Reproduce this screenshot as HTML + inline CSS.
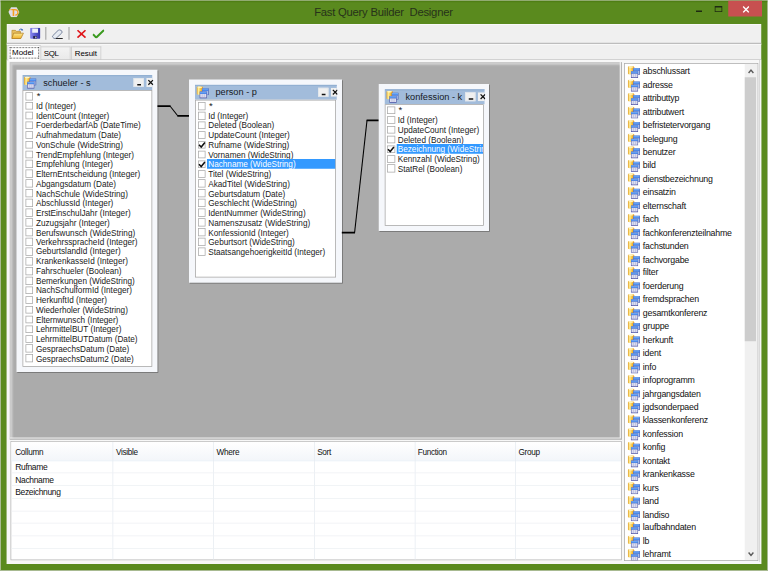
<!DOCTYPE html>
<html><head><meta charset="utf-8"><style>
html,body{margin:0;padding:0;}
body{width:768px;height:571px;position:relative;overflow:hidden;background:#5a8a1e;font-family:'Liberation Sans', sans-serif;}
#sc{position:absolute;left:0;top:0;width:768px;height:571px;transform:scale(0.75);transform-origin:0 0;}
#zm{position:absolute;left:0;top:0;width:768px;height:571px;zoom:1.333333;}
.t{}
</style></head><body><div id="sc"><div id="zm">
<svg style="position:absolute;left:0;top:0" width="0" height="0"><defs><linearGradient id="cyl" x1="0" x2="1" y1="0" y2="0"><stop offset="0" stop-color="#e09a20"/><stop offset="0.3" stop-color="#fff09a"/><stop offset="0.65" stop-color="#f8c23a"/><stop offset="1" stop-color="#ea9016"/></linearGradient>
<linearGradient id="bh" x1="0" x2="0" y1="0" y2="1"><stop offset="0" stop-color="#7ab4fa"/><stop offset="1" stop-color="#3c7ce6"/></linearGradient></defs></svg>
<div style="position:absolute;left:0;top:0;width:768px;height:571px;box-sizing:border-box;border:1px solid #c2cab8"></div>
<div style="position:absolute;left:1px;top:1px;width:766px;height:0.9px;background:#4f7f14"></div>
<svg style="position:absolute;left:8.5px;top:6.5px" width="11.5" height="11" viewBox="0 0 11.5 11"><polygon points="0.1,5.3 2.8,0.4 8.4,0.4 11.1,5.3 8.4,10.5 2.8,10.5" fill="#dedde8"/><path d="M1.1 2.9 H2.3" stroke="#f4a020" stroke-width="1.2"/><path d="M3 2.9 H6.2 Q9.6 2.9 9.7 5.7 Q9.7 8.2 7 8.3" stroke="#f4a020" stroke-width="1.3" fill="none"/><path d="M5.2 2.9 V9.2" stroke="#f4a020" stroke-width="1.6"/></svg>
<div style="position:absolute;left:314.2px;top:4.6px;font:11.3px 'Liberation Sans', sans-serif;letter-spacing:-0.25px;color:#27321a;white-space:pre;line-height:15px">Fast Query Builder  Designer</div>
<div style="position:absolute;left:695.8px;top:10.2px;width:5.9px;height:1.8px;background:#1e2a12"></div>
<div style="position:absolute;left:715px;top:6.3px;width:7.6px;height:5.4px;box-sizing:border-box;border:1px solid #1e2a12;border-top-width:1.8px"></div>
<div style="position:absolute;left:728.4px;top:1px;width:33.5px;height:15.4px;background:#c75050"></div>
<svg style="position:absolute;left:742.5px;top:6px" width="7" height="7" viewBox="0 0 7 7"><path d="M0.6 0.6 L6.4 6.4 M6.4 0.6 L0.6 6.4" stroke="#fff" stroke-width="1.4"/></svg>
<div style="position:absolute;left:7px;top:24px;width:754px;height:540px;background:#f0f0f0;box-shadow:inset 0.8px 0.8px 0 #fbfbfb"></div>
<div style="position:absolute;left:7px;top:43.0px;width:754px;height:0.9px;background:#bdbdbd"></div>
<div style="position:absolute;left:7px;top:43.9px;width:754px;height:0.8px;background:#fff"></div>
<div style="position:absolute;left:7px;top:60px;width:754px;height:504px;background:#f7f7f7"></div>
<div style="position:absolute;left:759px;top:60px;width:0.8px;height:502px;background:#cfcfcf"></div>
<div style="position:absolute;left:9.4px;top:62px;width:612.4px;height:377.4px;background:#ababab;box-sizing:border-box;border-right:0.9px solid #b2b2b2;border-bottom:0.9px solid #b2b2b2;box-shadow:inset -1.3px -1.3px 0 #eeeeee, inset 1px 1px 0 #c8c8c8, inset 2.6px 2.6px 2px #d2d2d2"></div>
<div style="position:absolute;left:16.7px;top:69.5px;width:140.8px;height:302.4px;background:#f5f7fb;box-shadow:0.8px 0.8px 0 #6f6f6f"></div>
<div style="position:absolute;left:22.7px;top:75.3px;width:129.8px;height:14.6px;background:#a2bcdb;box-shadow:inset 0 1.2px 0 #92b0d2"></div>
<svg style="position:absolute;left:24.3px;top:76.7px" width="13" height="12.5" viewBox="0 0 13 12.5">

<path d="M0.1 1.2 Q0.1 0 3.3 0 Q6.5 0 6.5 1.2 V7.4 Q6.5 8.5 3.3 8.5 Q0.1 8.5 0.1 7.4 Z" fill="url(#cyl)"/>
<ellipse cx="3.3" cy="1.1" rx="2.5" ry="0.75" fill="#fff6c4"/>
<rect x="5.5" y="2" width="6.7" height="6.8" fill="#4a5cac"/>
<rect x="5.7" y="2.2" width="6.1" height="2.6" fill="url(#bh)"/>
<rect x="5.9" y="4.8" width="5.7" height="3.6" fill="#a8c0ec"/>
<rect x="3.2" y="5.2" width="7.1" height="6.8" fill="#464ca0"/>
<rect x="3.4" y="5.4" width="6.7" height="2.3" fill="url(#bh)"/>
<rect x="3.7" y="7.7" width="6.1" height="3.6" fill="#dcdef0"/>
<path d="M5.7 7.9 V11.2 M7.8 7.9 V11.2" stroke="#a8acd4" stroke-width="0.55"/>
</svg>
<div style="position:absolute;left:43.2px;top:76.3px;font:9.2px 'Liberation Sans', sans-serif;color:#161a24;white-space:pre;line-height:13px">schueler - s</div>
<div style="position:absolute;left:133.5px;top:77.9px;width:10.4px;height:9.1px;box-sizing:border-box;background:#f0f0f0;border:0.6px solid #dde3ea"><div style="position:absolute;left:2.9px;top:5.5px;width:4.0px;height:1.6px;background:#111"></div></div>
<div style="position:absolute;left:146.1px;top:77.9px;width:7.300000000000006px;height:9.1px;overflow:hidden;"><div style="position:absolute;left:0;top:0;width:6.400000000000006px;height:9.1px;background:#f0f0f0"></div><svg style="position:absolute;left:2.0px;top:1.6px;overflow:visible" width="6" height="6" viewBox="0 0 6 6"><path d="M0.6 0.6 L5.2 5.2 M5.2 0.6 L0.6 5.2" stroke="#111" stroke-width="1.25"/></svg></div>
<div style="position:absolute;left:22.7px;top:89.89999999999999px;width:129.20000000000002px;height:276.8px;box-sizing:border-box;background:#fff;border:0.75px solid #a3a3a3;overflow:hidden">
<div style="position:absolute;left:1.9px;top:1.5px;width:6.5px;height:6.5px;border:0.9px solid #a9a9a9;background:#fff"></div>
<div class="t" style="position:absolute;left:13.3px;top:0.10000000000000009px;font:9.6px 'Liberation Sans', sans-serif;color:#1a1a1a;white-space:pre;line-height:11px">*</div>
<div style="position:absolute;left:1.9px;top:11.21px;width:6.5px;height:6.5px;border:0.9px solid #a9a9a9;background:#fff"></div>
<div class="t" style="position:absolute;left:12.5px;top:10.010000000000002px;font:8.2px 'Liberation Sans', sans-serif;color:#1a1a1a;white-space:pre;line-height:11px">Id (Integer)</div>
<div style="position:absolute;left:1.9px;top:20.92px;width:6.5px;height:6.5px;border:0.9px solid #a9a9a9;background:#fff"></div>
<div class="t" style="position:absolute;left:12.5px;top:19.720000000000002px;font:8.2px 'Liberation Sans', sans-serif;color:#1a1a1a;white-space:pre;line-height:11px">IdentCount (Integer)</div>
<div style="position:absolute;left:1.9px;top:30.630000000000003px;width:6.5px;height:6.5px;border:0.9px solid #a9a9a9;background:#fff"></div>
<div class="t" style="position:absolute;left:12.5px;top:29.430000000000003px;font:8.2px 'Liberation Sans', sans-serif;color:#1a1a1a;white-space:pre;line-height:11px">FoerderbedarfAb (DateTime)</div>
<div style="position:absolute;left:1.9px;top:40.34px;width:6.5px;height:6.5px;border:0.9px solid #a9a9a9;background:#fff"></div>
<div class="t" style="position:absolute;left:12.5px;top:39.14px;font:8.2px 'Liberation Sans', sans-serif;color:#1a1a1a;white-space:pre;line-height:11px">Aufnahmedatum (Date)</div>
<div style="position:absolute;left:1.9px;top:50.050000000000004px;width:6.5px;height:6.5px;border:0.9px solid #a9a9a9;background:#fff"></div>
<div class="t" style="position:absolute;left:12.5px;top:48.85px;font:8.2px 'Liberation Sans', sans-serif;color:#1a1a1a;white-space:pre;line-height:11px">VonSchule (WideString)</div>
<div style="position:absolute;left:1.9px;top:59.760000000000005px;width:6.5px;height:6.5px;border:0.9px solid #a9a9a9;background:#fff"></div>
<div class="t" style="position:absolute;left:12.5px;top:58.56px;font:8.2px 'Liberation Sans', sans-serif;color:#1a1a1a;white-space:pre;line-height:11px">TrendEmpfehlung (Integer)</div>
<div style="position:absolute;left:1.9px;top:69.47px;width:6.5px;height:6.5px;border:0.9px solid #a9a9a9;background:#fff"></div>
<div class="t" style="position:absolute;left:12.5px;top:68.27px;font:8.2px 'Liberation Sans', sans-serif;color:#1a1a1a;white-space:pre;line-height:11px">Empfehlung (Integer)</div>
<div style="position:absolute;left:1.9px;top:79.18px;width:6.5px;height:6.5px;border:0.9px solid #a9a9a9;background:#fff"></div>
<div class="t" style="position:absolute;left:12.5px;top:77.98px;font:8.2px 'Liberation Sans', sans-serif;color:#1a1a1a;white-space:pre;line-height:11px">ElternEntscheidung (Integer)</div>
<div style="position:absolute;left:1.9px;top:88.89000000000001px;width:6.5px;height:6.5px;border:0.9px solid #a9a9a9;background:#fff"></div>
<div class="t" style="position:absolute;left:12.5px;top:87.69000000000001px;font:8.2px 'Liberation Sans', sans-serif;color:#1a1a1a;white-space:pre;line-height:11px">Abgangsdatum (Date)</div>
<div style="position:absolute;left:1.9px;top:98.60000000000001px;width:6.5px;height:6.5px;border:0.9px solid #a9a9a9;background:#fff"></div>
<div class="t" style="position:absolute;left:12.5px;top:97.4px;font:8.2px 'Liberation Sans', sans-serif;color:#1a1a1a;white-space:pre;line-height:11px">NachSchule (WideString)</div>
<div style="position:absolute;left:1.9px;top:108.31px;width:6.5px;height:6.5px;border:0.9px solid #a9a9a9;background:#fff"></div>
<div class="t" style="position:absolute;left:12.5px;top:107.11px;font:8.2px 'Liberation Sans', sans-serif;color:#1a1a1a;white-space:pre;line-height:11px">AbschlussId (Integer)</div>
<div style="position:absolute;left:1.9px;top:118.02000000000001px;width:6.5px;height:6.5px;border:0.9px solid #a9a9a9;background:#fff"></div>
<div class="t" style="position:absolute;left:12.5px;top:116.82000000000001px;font:8.2px 'Liberation Sans', sans-serif;color:#1a1a1a;white-space:pre;line-height:11px">ErstEinschulJahr (Integer)</div>
<div style="position:absolute;left:1.9px;top:127.73000000000002px;width:6.5px;height:6.5px;border:0.9px solid #a9a9a9;background:#fff"></div>
<div class="t" style="position:absolute;left:12.5px;top:126.53000000000002px;font:8.2px 'Liberation Sans', sans-serif;color:#1a1a1a;white-space:pre;line-height:11px">Zuzugsjahr (Integer)</div>
<div style="position:absolute;left:1.9px;top:137.44px;width:6.5px;height:6.5px;border:0.9px solid #a9a9a9;background:#fff"></div>
<div class="t" style="position:absolute;left:12.5px;top:136.24px;font:8.2px 'Liberation Sans', sans-serif;color:#1a1a1a;white-space:pre;line-height:11px">Berufswunsch (WideString)</div>
<div style="position:absolute;left:1.9px;top:147.15px;width:6.5px;height:6.5px;border:0.9px solid #a9a9a9;background:#fff"></div>
<div class="t" style="position:absolute;left:12.5px;top:145.95000000000002px;font:8.2px 'Liberation Sans', sans-serif;color:#1a1a1a;white-space:pre;line-height:11px">VerkehrsspracheId (Integer)</div>
<div style="position:absolute;left:1.9px;top:156.86px;width:6.5px;height:6.5px;border:0.9px solid #a9a9a9;background:#fff"></div>
<div class="t" style="position:absolute;left:12.5px;top:155.66000000000003px;font:8.2px 'Liberation Sans', sans-serif;color:#1a1a1a;white-space:pre;line-height:11px">GeburtslandId (Integer)</div>
<div style="position:absolute;left:1.9px;top:166.57000000000002px;width:6.5px;height:6.5px;border:0.9px solid #a9a9a9;background:#fff"></div>
<div class="t" style="position:absolute;left:12.5px;top:165.37000000000003px;font:8.2px 'Liberation Sans', sans-serif;color:#1a1a1a;white-space:pre;line-height:11px">KrankenkasseId (Integer)</div>
<div style="position:absolute;left:1.9px;top:176.28000000000003px;width:6.5px;height:6.5px;border:0.9px solid #a9a9a9;background:#fff"></div>
<div class="t" style="position:absolute;left:12.5px;top:175.08000000000004px;font:8.2px 'Liberation Sans', sans-serif;color:#1a1a1a;white-space:pre;line-height:11px">Fahrschueler (Boolean)</div>
<div style="position:absolute;left:1.9px;top:185.99px;width:6.5px;height:6.5px;border:0.9px solid #a9a9a9;background:#fff"></div>
<div class="t" style="position:absolute;left:12.5px;top:184.79000000000002px;font:8.2px 'Liberation Sans', sans-serif;color:#1a1a1a;white-space:pre;line-height:11px">Bemerkungen (WideString)</div>
<div style="position:absolute;left:1.9px;top:195.70000000000002px;width:6.5px;height:6.5px;border:0.9px solid #a9a9a9;background:#fff"></div>
<div class="t" style="position:absolute;left:12.5px;top:194.50000000000003px;font:8.2px 'Liberation Sans', sans-serif;color:#1a1a1a;white-space:pre;line-height:11px">NachSchulformId (Integer)</div>
<div style="position:absolute;left:1.9px;top:205.41000000000003px;width:6.5px;height:6.5px;border:0.9px solid #a9a9a9;background:#fff"></div>
<div class="t" style="position:absolute;left:12.5px;top:204.21000000000004px;font:8.2px 'Liberation Sans', sans-serif;color:#1a1a1a;white-space:pre;line-height:11px">HerkunftId (Integer)</div>
<div style="position:absolute;left:1.9px;top:215.12px;width:6.5px;height:6.5px;border:0.9px solid #a9a9a9;background:#fff"></div>
<div class="t" style="position:absolute;left:12.5px;top:213.92000000000002px;font:8.2px 'Liberation Sans', sans-serif;color:#1a1a1a;white-space:pre;line-height:11px">Wiederholer (WideString)</div>
<div style="position:absolute;left:1.9px;top:224.83px;width:6.5px;height:6.5px;border:0.9px solid #a9a9a9;background:#fff"></div>
<div class="t" style="position:absolute;left:12.5px;top:223.63000000000002px;font:8.2px 'Liberation Sans', sans-serif;color:#1a1a1a;white-space:pre;line-height:11px">Elternwunsch (Integer)</div>
<div style="position:absolute;left:1.9px;top:234.54000000000002px;width:6.5px;height:6.5px;border:0.9px solid #a9a9a9;background:#fff"></div>
<div class="t" style="position:absolute;left:12.5px;top:233.34000000000003px;font:8.2px 'Liberation Sans', sans-serif;color:#1a1a1a;white-space:pre;line-height:11px">LehrmittelBUT (Integer)</div>
<div style="position:absolute;left:1.9px;top:244.25000000000003px;width:6.5px;height:6.5px;border:0.9px solid #a9a9a9;background:#fff"></div>
<div class="t" style="position:absolute;left:12.5px;top:243.05000000000004px;font:8.2px 'Liberation Sans', sans-serif;color:#1a1a1a;white-space:pre;line-height:11px">LehrmittelBUTDatum (Date)</div>
<div style="position:absolute;left:1.9px;top:253.96000000000004px;width:6.5px;height:6.5px;border:0.9px solid #a9a9a9;background:#fff"></div>
<div class="t" style="position:absolute;left:12.5px;top:252.76000000000005px;font:8.2px 'Liberation Sans', sans-serif;color:#1a1a1a;white-space:pre;line-height:11px">GespraechsDatum (Date)</div>
<div style="position:absolute;left:1.9px;top:263.67px;width:6.5px;height:6.5px;border:0.9px solid #a9a9a9;background:#fff"></div>
<div class="t" style="position:absolute;left:12.5px;top:262.47px;font:8.2px 'Liberation Sans', sans-serif;color:#1a1a1a;white-space:pre;line-height:11px">GespraechsDatum2 (Date)</div>
</div>
<div style="position:absolute;left:189px;top:79.3px;width:152.8px;height:203.6px;background:#f5f7fb;box-shadow:0.8px 0.8px 0 #6f6f6f"></div>
<div style="position:absolute;left:195.0px;top:85.1px;width:141.8px;height:14.6px;background:#a2bcdb;box-shadow:inset 0 1.2px 0 #92b0d2"></div>
<svg style="position:absolute;left:196.6px;top:86.5px" width="13" height="12.5" viewBox="0 0 13 12.5">

<path d="M0.1 1.2 Q0.1 0 3.3 0 Q6.5 0 6.5 1.2 V7.4 Q6.5 8.5 3.3 8.5 Q0.1 8.5 0.1 7.4 Z" fill="url(#cyl)"/>
<ellipse cx="3.3" cy="1.1" rx="2.5" ry="0.75" fill="#fff6c4"/>
<rect x="5.5" y="2" width="6.7" height="6.8" fill="#4a5cac"/>
<rect x="5.7" y="2.2" width="6.1" height="2.6" fill="url(#bh)"/>
<rect x="5.9" y="4.8" width="5.7" height="3.6" fill="#a8c0ec"/>
<rect x="3.2" y="5.2" width="7.1" height="6.8" fill="#464ca0"/>
<rect x="3.4" y="5.4" width="6.7" height="2.3" fill="url(#bh)"/>
<rect x="3.7" y="7.7" width="6.1" height="3.6" fill="#dcdef0"/>
<path d="M5.7 7.9 V11.2 M7.8 7.9 V11.2" stroke="#a8acd4" stroke-width="0.55"/>
</svg>
<div style="position:absolute;left:215.5px;top:86.1px;font:9.2px 'Liberation Sans', sans-serif;color:#161a24;white-space:pre;line-height:13px">person - p</div>
<div style="position:absolute;left:317.8px;top:87.7px;width:10.4px;height:9.1px;box-sizing:border-box;background:#f0f0f0;border:0.6px solid #dde3ea"><div style="position:absolute;left:2.9px;top:5.5px;width:4.0px;height:1.6px;background:#111"></div></div>
<div style="position:absolute;left:330.40000000000003px;top:87.7px;width:7.299999999999978px;height:9.1px;overflow:hidden;"><div style="position:absolute;left:0;top:0;width:6.399999999999977px;height:9.1px;background:#f0f0f0"></div><svg style="position:absolute;left:2.0px;top:1.6px;overflow:visible" width="6" height="6" viewBox="0 0 6 6"><path d="M0.6 0.6 L5.2 5.2 M5.2 0.6 L0.6 5.2" stroke="#111" stroke-width="1.25"/></svg></div>
<div style="position:absolute;left:195.0px;top:99.69999999999999px;width:141.20000000000002px;height:178.0px;box-sizing:border-box;background:#fff;border:0.75px solid #a3a3a3;overflow:hidden">
<div style="position:absolute;left:1.9px;top:1.5px;width:6.5px;height:6.5px;border:0.9px solid #a9a9a9;background:#fff"></div>
<div class="t" style="position:absolute;left:13.3px;top:0.10000000000000009px;font:9.6px 'Liberation Sans', sans-serif;color:#1a1a1a;white-space:pre;line-height:11px">*</div>
<div style="position:absolute;left:1.9px;top:11.21px;width:6.5px;height:6.5px;border:0.9px solid #a9a9a9;background:#fff"></div>
<div class="t" style="position:absolute;left:12.5px;top:10.010000000000002px;font:8.2px 'Liberation Sans', sans-serif;color:#1a1a1a;white-space:pre;line-height:11px">Id (Integer)</div>
<div style="position:absolute;left:1.9px;top:20.92px;width:6.5px;height:6.5px;border:0.9px solid #a9a9a9;background:#fff"></div>
<div class="t" style="position:absolute;left:12.5px;top:19.720000000000002px;font:8.2px 'Liberation Sans', sans-serif;color:#1a1a1a;white-space:pre;line-height:11px">Deleted (Boolean)</div>
<div style="position:absolute;left:1.9px;top:30.630000000000003px;width:6.5px;height:6.5px;border:0.9px solid #a9a9a9;background:#fff"></div>
<div class="t" style="position:absolute;left:12.5px;top:29.430000000000003px;font:8.2px 'Liberation Sans', sans-serif;color:#1a1a1a;white-space:pre;line-height:11px">UpdateCount (Integer)</div>
<div style="position:absolute;left:1.9px;top:40.34px;width:6.5px;height:6.5px;border:0.9px solid #a9a9a9;background:#fff"></div><svg style="position:absolute;left:1.9px;top:40.34px" width="9" height="9" viewBox="0 0 9 9"><path d="M1.0 3.8 L3.2 6.0 L6.9 1.5" stroke="#111" stroke-width="1.55" fill="none"/></svg>
<div class="t" style="position:absolute;left:12.5px;top:39.14px;font:8.2px 'Liberation Sans', sans-serif;color:#1a1a1a;white-space:pre;line-height:11px">Rufname (WideString)</div>
<div style="position:absolute;left:1.9px;top:50.050000000000004px;width:6.5px;height:6.5px;border:0.9px solid #a9a9a9;background:#fff"></div>
<div class="t" style="position:absolute;left:12.5px;top:48.85px;font:8.2px 'Liberation Sans', sans-serif;color:#1a1a1a;white-space:pre;line-height:11px">Vornamen (WideString)</div>
<div style="position:absolute;left:11.6px;top:58.760000000000005px;width:141.20000000000002px;height:9.4px;background:#3399ff"></div>
<div style="position:absolute;left:1.9px;top:59.760000000000005px;width:6.5px;height:6.5px;border:0.9px solid #a9a9a9;background:#fff"></div><svg style="position:absolute;left:1.9px;top:59.760000000000005px" width="9" height="9" viewBox="0 0 9 9"><path d="M1.0 3.8 L3.2 6.0 L6.9 1.5" stroke="#111" stroke-width="1.55" fill="none"/></svg>
<div class="t" style="position:absolute;left:12.5px;top:58.56px;font:8.2px 'Liberation Sans', sans-serif;color:#fff;white-space:pre;line-height:11px">Nachname (WideString)</div>
<div style="position:absolute;left:1.9px;top:69.47px;width:6.5px;height:6.5px;border:0.9px solid #a9a9a9;background:#fff"></div>
<div class="t" style="position:absolute;left:12.5px;top:68.27px;font:8.2px 'Liberation Sans', sans-serif;color:#1a1a1a;white-space:pre;line-height:11px">Titel (WideString)</div>
<div style="position:absolute;left:1.9px;top:79.18px;width:6.5px;height:6.5px;border:0.9px solid #a9a9a9;background:#fff"></div>
<div class="t" style="position:absolute;left:12.5px;top:77.98px;font:8.2px 'Liberation Sans', sans-serif;color:#1a1a1a;white-space:pre;line-height:11px">AkadTitel (WideString)</div>
<div style="position:absolute;left:1.9px;top:88.89000000000001px;width:6.5px;height:6.5px;border:0.9px solid #a9a9a9;background:#fff"></div>
<div class="t" style="position:absolute;left:12.5px;top:87.69000000000001px;font:8.2px 'Liberation Sans', sans-serif;color:#1a1a1a;white-space:pre;line-height:11px">Geburtsdatum (Date)</div>
<div style="position:absolute;left:1.9px;top:98.60000000000001px;width:6.5px;height:6.5px;border:0.9px solid #a9a9a9;background:#fff"></div>
<div class="t" style="position:absolute;left:12.5px;top:97.4px;font:8.2px 'Liberation Sans', sans-serif;color:#1a1a1a;white-space:pre;line-height:11px">Geschlecht (WideString)</div>
<div style="position:absolute;left:1.9px;top:108.31px;width:6.5px;height:6.5px;border:0.9px solid #a9a9a9;background:#fff"></div>
<div class="t" style="position:absolute;left:12.5px;top:107.11px;font:8.2px 'Liberation Sans', sans-serif;color:#1a1a1a;white-space:pre;line-height:11px">IdentNummer (WideString)</div>
<div style="position:absolute;left:1.9px;top:118.02000000000001px;width:6.5px;height:6.5px;border:0.9px solid #a9a9a9;background:#fff"></div>
<div class="t" style="position:absolute;left:12.5px;top:116.82000000000001px;font:8.2px 'Liberation Sans', sans-serif;color:#1a1a1a;white-space:pre;line-height:11px">Namenszusatz (WideString)</div>
<div style="position:absolute;left:1.9px;top:127.73000000000002px;width:6.5px;height:6.5px;border:0.9px solid #a9a9a9;background:#fff"></div>
<div class="t" style="position:absolute;left:12.5px;top:126.53000000000002px;font:8.2px 'Liberation Sans', sans-serif;color:#1a1a1a;white-space:pre;line-height:11px">KonfessionId (Integer)</div>
<div style="position:absolute;left:1.9px;top:137.44px;width:6.5px;height:6.5px;border:0.9px solid #a9a9a9;background:#fff"></div>
<div class="t" style="position:absolute;left:12.5px;top:136.24px;font:8.2px 'Liberation Sans', sans-serif;color:#1a1a1a;white-space:pre;line-height:11px">Geburtsort (WideString)</div>
<div style="position:absolute;left:1.9px;top:147.15px;width:6.5px;height:6.5px;border:0.9px solid #a9a9a9;background:#fff"></div>
<div class="t" style="position:absolute;left:12.5px;top:145.95000000000002px;font:8.2px 'Liberation Sans', sans-serif;color:#1a1a1a;white-space:pre;line-height:11px">StaatsangehoerigkeitId (Integer)</div>
</div>
<div style="position:absolute;left:378.5px;top:83.7px;width:110.8px;height:147.5px;background:#f5f7fb;box-shadow:0.8px 0.8px 0 #6f6f6f"></div>
<div style="position:absolute;left:384.5px;top:89.5px;width:99.8px;height:14.6px;background:#a2bcdb;box-shadow:inset 0 1.2px 0 #92b0d2"></div>
<svg style="position:absolute;left:386.1px;top:90.9px" width="13" height="12.5" viewBox="0 0 13 12.5">

<path d="M0.1 1.2 Q0.1 0 3.3 0 Q6.5 0 6.5 1.2 V7.4 Q6.5 8.5 3.3 8.5 Q0.1 8.5 0.1 7.4 Z" fill="url(#cyl)"/>
<ellipse cx="3.3" cy="1.1" rx="2.5" ry="0.75" fill="#fff6c4"/>
<rect x="5.5" y="2" width="6.7" height="6.8" fill="#4a5cac"/>
<rect x="5.7" y="2.2" width="6.1" height="2.6" fill="url(#bh)"/>
<rect x="5.9" y="4.8" width="5.7" height="3.6" fill="#a8c0ec"/>
<rect x="3.2" y="5.2" width="7.1" height="6.8" fill="#464ca0"/>
<rect x="3.4" y="5.4" width="6.7" height="2.3" fill="url(#bh)"/>
<rect x="3.7" y="7.7" width="6.1" height="3.6" fill="#dcdef0"/>
<path d="M5.7 7.9 V11.2 M7.8 7.9 V11.2" stroke="#a8acd4" stroke-width="0.55"/>
</svg>
<div style="position:absolute;left:405.5px;top:90.5px;font:9.2px 'Liberation Sans', sans-serif;color:#161a24;white-space:pre;line-height:13px">konfession - k</div>
<div style="position:absolute;left:465.3px;top:92.10000000000001px;width:10.4px;height:9.1px;box-sizing:border-box;background:#f0f0f0;border:0.6px solid #dde3ea"><div style="position:absolute;left:2.9px;top:5.5px;width:4.0px;height:1.6px;background:#111"></div></div>
<div style="position:absolute;left:477.90000000000003px;top:92.10000000000001px;width:7.299999999999978px;height:9.1px;overflow:hidden;"><div style="position:absolute;left:0;top:0;width:6.399999999999977px;height:9.1px;background:#f0f0f0"></div><svg style="position:absolute;left:2.0px;top:1.6px;overflow:visible" width="6" height="6" viewBox="0 0 6 6"><path d="M0.6 0.6 L5.2 5.2 M5.2 0.6 L0.6 5.2" stroke="#111" stroke-width="1.25"/></svg></div>
<div style="position:absolute;left:384.5px;top:104.1px;width:99.2px;height:121.89999999999999px;box-sizing:border-box;background:#fff;border:0.75px solid #a3a3a3;overflow:hidden">
<div style="position:absolute;left:1.9px;top:1.5px;width:6.5px;height:6.5px;border:0.9px solid #a9a9a9;background:#fff"></div>
<div class="t" style="position:absolute;left:13.3px;top:0.10000000000000009px;font:9.6px 'Liberation Sans', sans-serif;color:#1a1a1a;white-space:pre;line-height:11px">*</div>
<div style="position:absolute;left:1.9px;top:11.21px;width:6.5px;height:6.5px;border:0.9px solid #a9a9a9;background:#fff"></div>
<div class="t" style="position:absolute;left:12.5px;top:10.010000000000002px;font:8.2px 'Liberation Sans', sans-serif;color:#1a1a1a;white-space:pre;line-height:11px">Id (Integer)</div>
<div style="position:absolute;left:1.9px;top:20.92px;width:6.5px;height:6.5px;border:0.9px solid #a9a9a9;background:#fff"></div>
<div class="t" style="position:absolute;left:12.5px;top:19.720000000000002px;font:8.2px 'Liberation Sans', sans-serif;color:#1a1a1a;white-space:pre;line-height:11px">UpdateCount (Integer)</div>
<div style="position:absolute;left:1.9px;top:30.630000000000003px;width:6.5px;height:6.5px;border:0.9px solid #a9a9a9;background:#fff"></div>
<div class="t" style="position:absolute;left:12.5px;top:29.430000000000003px;font:8.2px 'Liberation Sans', sans-serif;color:#1a1a1a;white-space:pre;line-height:11px">Deleted (Boolean)</div>
<div style="position:absolute;left:11.6px;top:39.34px;width:99.2px;height:9.4px;background:#3399ff"></div>
<div style="position:absolute;left:1.9px;top:40.34px;width:6.5px;height:6.5px;border:0.9px solid #a9a9a9;background:#fff"></div><svg style="position:absolute;left:1.9px;top:40.34px" width="9" height="9" viewBox="0 0 9 9"><path d="M1.0 3.8 L3.2 6.0 L6.9 1.5" stroke="#111" stroke-width="1.55" fill="none"/></svg>
<div class="t" style="position:absolute;left:12.5px;top:39.14px;font:8.2px 'Liberation Sans', sans-serif;color:#fff;white-space:pre;line-height:11px">Bezeichnung (WideString)</div>
<div style="position:absolute;left:1.9px;top:50.050000000000004px;width:6.5px;height:6.5px;border:0.9px solid #a9a9a9;background:#fff"></div>
<div class="t" style="position:absolute;left:12.5px;top:48.85px;font:8.2px 'Liberation Sans', sans-serif;color:#1a1a1a;white-space:pre;line-height:11px">Kennzahl (WideString)</div>
<div style="position:absolute;left:1.9px;top:59.760000000000005px;width:6.5px;height:6.5px;border:0.9px solid #a9a9a9;background:#fff"></div>
<div class="t" style="position:absolute;left:12.5px;top:58.56px;font:8.2px 'Liberation Sans', sans-serif;color:#1a1a1a;white-space:pre;line-height:11px">StatRel (Boolean)</div>
</div>
<svg style="position:absolute;left:0;top:0" width="768" height="571"><path d="M157.5 106.2 H170.6 M177.3 115.8 H189" stroke="#000" stroke-width="1.7" fill="none"/><path d="M170.2 106.2 L177.7 115.8" stroke="#000" stroke-width="1.05" fill="none"/><path d="M341.8 232.6 H355 M366.6 120.4 H378.5" stroke="#000" stroke-width="1.7" fill="none"/><path d="M354.6 232.6 L367 120.4" stroke="#000" stroke-width="1.05" fill="none"/></svg>
<div style="position:absolute;left:10.4px;top:441px;width:611.1px;height:119.4px;box-sizing:border-box;border:0.8px solid #b4b4b4;background:#fff;overflow:hidden">
<div style="position:absolute;left:0;top:0;width:100%;height:18.7px;background:linear-gradient(#fff,#f3f6fa);border-bottom:0.8px solid #e6edf5"></div>
<div class="t" style="position:absolute;left:4.1px;top:4.2px;font:8.2px 'Liberation Sans', sans-serif;letter-spacing:-0.3px;color:#111;white-space:pre;line-height:11px">Collumn</div>
<div class="t" style="position:absolute;left:104.75px;top:4.2px;font:8.2px 'Liberation Sans', sans-serif;letter-spacing:-0.3px;color:#111;white-space:pre;line-height:11px">Visible</div>
<div style="position:absolute;left:101.45px;top:0;width:0.8px;height:119px;background:#e6ebf1"></div>
<div class="t" style="position:absolute;left:205.4px;top:4.2px;font:8.2px 'Liberation Sans', sans-serif;letter-spacing:-0.3px;color:#111;white-space:pre;line-height:11px">Where</div>
<div style="position:absolute;left:202.10000000000002px;top:0;width:0.8px;height:119px;background:#e6ebf1"></div>
<div class="t" style="position:absolute;left:306.05000000000007px;top:4.2px;font:8.2px 'Liberation Sans', sans-serif;letter-spacing:-0.3px;color:#111;white-space:pre;line-height:11px">Sort</div>
<div style="position:absolute;left:302.75000000000006px;top:0;width:0.8px;height:119px;background:#e6ebf1"></div>
<div class="t" style="position:absolute;left:406.70000000000005px;top:4.2px;font:8.2px 'Liberation Sans', sans-serif;letter-spacing:-0.3px;color:#111;white-space:pre;line-height:11px">Function</div>
<div style="position:absolute;left:403.40000000000003px;top:0;width:0.8px;height:119px;background:#e6ebf1"></div>
<div class="t" style="position:absolute;left:507.35px;top:4.2px;font:8.2px 'Liberation Sans', sans-serif;letter-spacing:-0.3px;color:#111;white-space:pre;line-height:11px">Group</div>
<div style="position:absolute;left:504.05px;top:0;width:0.8px;height:119px;background:#e6ebf1"></div>
<div style="position:absolute;left:0;top:30.8px;width:100%;height:0.8px;background:#edf0f3"></div>
<div style="position:absolute;left:0;top:43.43px;width:100%;height:0.8px;background:#edf0f3"></div>
<div style="position:absolute;left:0;top:56.06px;width:100%;height:0.8px;background:#edf0f3"></div>
<div style="position:absolute;left:0;top:68.69px;width:100%;height:0.8px;background:#edf0f3"></div>
<div style="position:absolute;left:0;top:81.32000000000001px;width:100%;height:0.8px;background:#edf0f3"></div>
<div style="position:absolute;left:0;top:93.95px;width:100%;height:0.8px;background:#edf0f3"></div>
<div style="position:absolute;left:0;top:106.58px;width:100%;height:0.8px;background:#edf0f3"></div>
<div style="position:absolute;left:0;top:119.21000000000001px;width:100%;height:0.8px;background:#edf0f3"></div>
<div class="t" style="position:absolute;left:4.1px;top:20.1px;font:8.5px 'Liberation Sans', sans-serif;letter-spacing:-0.35px;color:#111;white-space:pre;line-height:11px">Rufname</div>
<div class="t" style="position:absolute;left:4.1px;top:32.650000000000006px;font:8.5px 'Liberation Sans', sans-serif;letter-spacing:-0.35px;color:#111;white-space:pre;line-height:11px">Nachname</div>
<div class="t" style="position:absolute;left:4.1px;top:45.2px;font:8.5px 'Liberation Sans', sans-serif;letter-spacing:-0.35px;color:#111;white-space:pre;line-height:11px">Bezeichnung</div>
</div>
<div style="position:absolute;left:623.7px;top:62.7px;width:134.3px;height:498.4px;box-sizing:border-box;border:0.8px solid #a9a9a9;background:#fff;overflow:hidden">
<svg style="position:absolute;left:3.2px;top:2.6px" width="13" height="12.5" viewBox="0 0 13 12.5">

<path d="M0.1 1.2 Q0.1 0 3.3 0 Q6.5 0 6.5 1.2 V7.4 Q6.5 8.5 3.3 8.5 Q0.1 8.5 0.1 7.4 Z" fill="url(#cyl)"/>
<ellipse cx="3.3" cy="1.1" rx="2.5" ry="0.75" fill="#fff6c4"/>
<rect x="5.5" y="2" width="6.7" height="6.8" fill="#4a5cac"/>
<rect x="5.7" y="2.2" width="6.1" height="2.6" fill="url(#bh)"/>
<rect x="5.9" y="4.8" width="5.7" height="3.6" fill="#a8c0ec"/>
<rect x="3.2" y="5.2" width="7.1" height="6.8" fill="#464ca0"/>
<rect x="3.4" y="5.4" width="6.7" height="2.3" fill="url(#bh)"/>
<rect x="3.7" y="7.7" width="6.1" height="3.6" fill="#dcdef0"/>
<path d="M5.7 7.9 V11.2 M7.8 7.9 V11.2" stroke="#a8acd4" stroke-width="0.55"/>
</svg>
<div class="t" style="position:absolute;left:18.4px;top:2.6px;font:8.8px 'Liberation Sans', sans-serif;letter-spacing:-0.2px;color:#111;white-space:pre;line-height:11px">abschlussart</div>
<svg style="position:absolute;left:3.2px;top:16.02px" width="13" height="12.5" viewBox="0 0 13 12.5">

<path d="M0.1 1.2 Q0.1 0 3.3 0 Q6.5 0 6.5 1.2 V7.4 Q6.5 8.5 3.3 8.5 Q0.1 8.5 0.1 7.4 Z" fill="url(#cyl)"/>
<ellipse cx="3.3" cy="1.1" rx="2.5" ry="0.75" fill="#fff6c4"/>
<rect x="5.5" y="2" width="6.7" height="6.8" fill="#4a5cac"/>
<rect x="5.7" y="2.2" width="6.1" height="2.6" fill="url(#bh)"/>
<rect x="5.9" y="4.8" width="5.7" height="3.6" fill="#a8c0ec"/>
<rect x="3.2" y="5.2" width="7.1" height="6.8" fill="#464ca0"/>
<rect x="3.4" y="5.4" width="6.7" height="2.3" fill="url(#bh)"/>
<rect x="3.7" y="7.7" width="6.1" height="3.6" fill="#dcdef0"/>
<path d="M5.7 7.9 V11.2 M7.8 7.9 V11.2" stroke="#a8acd4" stroke-width="0.55"/>
</svg>
<div class="t" style="position:absolute;left:18.4px;top:16.02px;font:8.8px 'Liberation Sans', sans-serif;letter-spacing:-0.2px;color:#111;white-space:pre;line-height:11px">adresse</div>
<svg style="position:absolute;left:3.2px;top:29.44px" width="13" height="12.5" viewBox="0 0 13 12.5">

<path d="M0.1 1.2 Q0.1 0 3.3 0 Q6.5 0 6.5 1.2 V7.4 Q6.5 8.5 3.3 8.5 Q0.1 8.5 0.1 7.4 Z" fill="url(#cyl)"/>
<ellipse cx="3.3" cy="1.1" rx="2.5" ry="0.75" fill="#fff6c4"/>
<rect x="5.5" y="2" width="6.7" height="6.8" fill="#4a5cac"/>
<rect x="5.7" y="2.2" width="6.1" height="2.6" fill="url(#bh)"/>
<rect x="5.9" y="4.8" width="5.7" height="3.6" fill="#a8c0ec"/>
<rect x="3.2" y="5.2" width="7.1" height="6.8" fill="#464ca0"/>
<rect x="3.4" y="5.4" width="6.7" height="2.3" fill="url(#bh)"/>
<rect x="3.7" y="7.7" width="6.1" height="3.6" fill="#dcdef0"/>
<path d="M5.7 7.9 V11.2 M7.8 7.9 V11.2" stroke="#a8acd4" stroke-width="0.55"/>
</svg>
<div class="t" style="position:absolute;left:18.4px;top:29.44px;font:8.8px 'Liberation Sans', sans-serif;letter-spacing:-0.2px;color:#111;white-space:pre;line-height:11px">attributtyp</div>
<svg style="position:absolute;left:3.2px;top:42.86px" width="13" height="12.5" viewBox="0 0 13 12.5">

<path d="M0.1 1.2 Q0.1 0 3.3 0 Q6.5 0 6.5 1.2 V7.4 Q6.5 8.5 3.3 8.5 Q0.1 8.5 0.1 7.4 Z" fill="url(#cyl)"/>
<ellipse cx="3.3" cy="1.1" rx="2.5" ry="0.75" fill="#fff6c4"/>
<rect x="5.5" y="2" width="6.7" height="6.8" fill="#4a5cac"/>
<rect x="5.7" y="2.2" width="6.1" height="2.6" fill="url(#bh)"/>
<rect x="5.9" y="4.8" width="5.7" height="3.6" fill="#a8c0ec"/>
<rect x="3.2" y="5.2" width="7.1" height="6.8" fill="#464ca0"/>
<rect x="3.4" y="5.4" width="6.7" height="2.3" fill="url(#bh)"/>
<rect x="3.7" y="7.7" width="6.1" height="3.6" fill="#dcdef0"/>
<path d="M5.7 7.9 V11.2 M7.8 7.9 V11.2" stroke="#a8acd4" stroke-width="0.55"/>
</svg>
<div class="t" style="position:absolute;left:18.4px;top:42.86px;font:8.8px 'Liberation Sans', sans-serif;letter-spacing:-0.2px;color:#111;white-space:pre;line-height:11px">attributwert</div>
<svg style="position:absolute;left:3.2px;top:56.28px" width="13" height="12.5" viewBox="0 0 13 12.5">

<path d="M0.1 1.2 Q0.1 0 3.3 0 Q6.5 0 6.5 1.2 V7.4 Q6.5 8.5 3.3 8.5 Q0.1 8.5 0.1 7.4 Z" fill="url(#cyl)"/>
<ellipse cx="3.3" cy="1.1" rx="2.5" ry="0.75" fill="#fff6c4"/>
<rect x="5.5" y="2" width="6.7" height="6.8" fill="#4a5cac"/>
<rect x="5.7" y="2.2" width="6.1" height="2.6" fill="url(#bh)"/>
<rect x="5.9" y="4.8" width="5.7" height="3.6" fill="#a8c0ec"/>
<rect x="3.2" y="5.2" width="7.1" height="6.8" fill="#464ca0"/>
<rect x="3.4" y="5.4" width="6.7" height="2.3" fill="url(#bh)"/>
<rect x="3.7" y="7.7" width="6.1" height="3.6" fill="#dcdef0"/>
<path d="M5.7 7.9 V11.2 M7.8 7.9 V11.2" stroke="#a8acd4" stroke-width="0.55"/>
</svg>
<div class="t" style="position:absolute;left:18.4px;top:56.28px;font:8.8px 'Liberation Sans', sans-serif;letter-spacing:-0.2px;color:#111;white-space:pre;line-height:11px">befristetervorgang</div>
<svg style="position:absolute;left:3.2px;top:69.69999999999999px" width="13" height="12.5" viewBox="0 0 13 12.5">

<path d="M0.1 1.2 Q0.1 0 3.3 0 Q6.5 0 6.5 1.2 V7.4 Q6.5 8.5 3.3 8.5 Q0.1 8.5 0.1 7.4 Z" fill="url(#cyl)"/>
<ellipse cx="3.3" cy="1.1" rx="2.5" ry="0.75" fill="#fff6c4"/>
<rect x="5.5" y="2" width="6.7" height="6.8" fill="#4a5cac"/>
<rect x="5.7" y="2.2" width="6.1" height="2.6" fill="url(#bh)"/>
<rect x="5.9" y="4.8" width="5.7" height="3.6" fill="#a8c0ec"/>
<rect x="3.2" y="5.2" width="7.1" height="6.8" fill="#464ca0"/>
<rect x="3.4" y="5.4" width="6.7" height="2.3" fill="url(#bh)"/>
<rect x="3.7" y="7.7" width="6.1" height="3.6" fill="#dcdef0"/>
<path d="M5.7 7.9 V11.2 M7.8 7.9 V11.2" stroke="#a8acd4" stroke-width="0.55"/>
</svg>
<div class="t" style="position:absolute;left:18.4px;top:69.69999999999999px;font:8.8px 'Liberation Sans', sans-serif;letter-spacing:-0.2px;color:#111;white-space:pre;line-height:11px">belegung</div>
<svg style="position:absolute;left:3.2px;top:83.11999999999999px" width="13" height="12.5" viewBox="0 0 13 12.5">

<path d="M0.1 1.2 Q0.1 0 3.3 0 Q6.5 0 6.5 1.2 V7.4 Q6.5 8.5 3.3 8.5 Q0.1 8.5 0.1 7.4 Z" fill="url(#cyl)"/>
<ellipse cx="3.3" cy="1.1" rx="2.5" ry="0.75" fill="#fff6c4"/>
<rect x="5.5" y="2" width="6.7" height="6.8" fill="#4a5cac"/>
<rect x="5.7" y="2.2" width="6.1" height="2.6" fill="url(#bh)"/>
<rect x="5.9" y="4.8" width="5.7" height="3.6" fill="#a8c0ec"/>
<rect x="3.2" y="5.2" width="7.1" height="6.8" fill="#464ca0"/>
<rect x="3.4" y="5.4" width="6.7" height="2.3" fill="url(#bh)"/>
<rect x="3.7" y="7.7" width="6.1" height="3.6" fill="#dcdef0"/>
<path d="M5.7 7.9 V11.2 M7.8 7.9 V11.2" stroke="#a8acd4" stroke-width="0.55"/>
</svg>
<div class="t" style="position:absolute;left:18.4px;top:83.11999999999999px;font:8.8px 'Liberation Sans', sans-serif;letter-spacing:-0.2px;color:#111;white-space:pre;line-height:11px">benutzer</div>
<svg style="position:absolute;left:3.2px;top:96.53999999999999px" width="13" height="12.5" viewBox="0 0 13 12.5">

<path d="M0.1 1.2 Q0.1 0 3.3 0 Q6.5 0 6.5 1.2 V7.4 Q6.5 8.5 3.3 8.5 Q0.1 8.5 0.1 7.4 Z" fill="url(#cyl)"/>
<ellipse cx="3.3" cy="1.1" rx="2.5" ry="0.75" fill="#fff6c4"/>
<rect x="5.5" y="2" width="6.7" height="6.8" fill="#4a5cac"/>
<rect x="5.7" y="2.2" width="6.1" height="2.6" fill="url(#bh)"/>
<rect x="5.9" y="4.8" width="5.7" height="3.6" fill="#a8c0ec"/>
<rect x="3.2" y="5.2" width="7.1" height="6.8" fill="#464ca0"/>
<rect x="3.4" y="5.4" width="6.7" height="2.3" fill="url(#bh)"/>
<rect x="3.7" y="7.7" width="6.1" height="3.6" fill="#dcdef0"/>
<path d="M5.7 7.9 V11.2 M7.8 7.9 V11.2" stroke="#a8acd4" stroke-width="0.55"/>
</svg>
<div class="t" style="position:absolute;left:18.4px;top:96.53999999999999px;font:8.8px 'Liberation Sans', sans-serif;letter-spacing:-0.2px;color:#111;white-space:pre;line-height:11px">bild</div>
<svg style="position:absolute;left:3.2px;top:109.96px" width="13" height="12.5" viewBox="0 0 13 12.5">

<path d="M0.1 1.2 Q0.1 0 3.3 0 Q6.5 0 6.5 1.2 V7.4 Q6.5 8.5 3.3 8.5 Q0.1 8.5 0.1 7.4 Z" fill="url(#cyl)"/>
<ellipse cx="3.3" cy="1.1" rx="2.5" ry="0.75" fill="#fff6c4"/>
<rect x="5.5" y="2" width="6.7" height="6.8" fill="#4a5cac"/>
<rect x="5.7" y="2.2" width="6.1" height="2.6" fill="url(#bh)"/>
<rect x="5.9" y="4.8" width="5.7" height="3.6" fill="#a8c0ec"/>
<rect x="3.2" y="5.2" width="7.1" height="6.8" fill="#464ca0"/>
<rect x="3.4" y="5.4" width="6.7" height="2.3" fill="url(#bh)"/>
<rect x="3.7" y="7.7" width="6.1" height="3.6" fill="#dcdef0"/>
<path d="M5.7 7.9 V11.2 M7.8 7.9 V11.2" stroke="#a8acd4" stroke-width="0.55"/>
</svg>
<div class="t" style="position:absolute;left:18.4px;top:109.96px;font:8.8px 'Liberation Sans', sans-serif;letter-spacing:-0.2px;color:#111;white-space:pre;line-height:11px">dienstbezeichnung</div>
<svg style="position:absolute;left:3.2px;top:123.38px" width="13" height="12.5" viewBox="0 0 13 12.5">

<path d="M0.1 1.2 Q0.1 0 3.3 0 Q6.5 0 6.5 1.2 V7.4 Q6.5 8.5 3.3 8.5 Q0.1 8.5 0.1 7.4 Z" fill="url(#cyl)"/>
<ellipse cx="3.3" cy="1.1" rx="2.5" ry="0.75" fill="#fff6c4"/>
<rect x="5.5" y="2" width="6.7" height="6.8" fill="#4a5cac"/>
<rect x="5.7" y="2.2" width="6.1" height="2.6" fill="url(#bh)"/>
<rect x="5.9" y="4.8" width="5.7" height="3.6" fill="#a8c0ec"/>
<rect x="3.2" y="5.2" width="7.1" height="6.8" fill="#464ca0"/>
<rect x="3.4" y="5.4" width="6.7" height="2.3" fill="url(#bh)"/>
<rect x="3.7" y="7.7" width="6.1" height="3.6" fill="#dcdef0"/>
<path d="M5.7 7.9 V11.2 M7.8 7.9 V11.2" stroke="#a8acd4" stroke-width="0.55"/>
</svg>
<div class="t" style="position:absolute;left:18.4px;top:123.38px;font:8.8px 'Liberation Sans', sans-serif;letter-spacing:-0.2px;color:#111;white-space:pre;line-height:11px">einsatzin</div>
<svg style="position:absolute;left:3.2px;top:136.79999999999998px" width="13" height="12.5" viewBox="0 0 13 12.5">

<path d="M0.1 1.2 Q0.1 0 3.3 0 Q6.5 0 6.5 1.2 V7.4 Q6.5 8.5 3.3 8.5 Q0.1 8.5 0.1 7.4 Z" fill="url(#cyl)"/>
<ellipse cx="3.3" cy="1.1" rx="2.5" ry="0.75" fill="#fff6c4"/>
<rect x="5.5" y="2" width="6.7" height="6.8" fill="#4a5cac"/>
<rect x="5.7" y="2.2" width="6.1" height="2.6" fill="url(#bh)"/>
<rect x="5.9" y="4.8" width="5.7" height="3.6" fill="#a8c0ec"/>
<rect x="3.2" y="5.2" width="7.1" height="6.8" fill="#464ca0"/>
<rect x="3.4" y="5.4" width="6.7" height="2.3" fill="url(#bh)"/>
<rect x="3.7" y="7.7" width="6.1" height="3.6" fill="#dcdef0"/>
<path d="M5.7 7.9 V11.2 M7.8 7.9 V11.2" stroke="#a8acd4" stroke-width="0.55"/>
</svg>
<div class="t" style="position:absolute;left:18.4px;top:136.79999999999998px;font:8.8px 'Liberation Sans', sans-serif;letter-spacing:-0.2px;color:#111;white-space:pre;line-height:11px">elternschaft</div>
<svg style="position:absolute;left:3.2px;top:150.22px" width="13" height="12.5" viewBox="0 0 13 12.5">

<path d="M0.1 1.2 Q0.1 0 3.3 0 Q6.5 0 6.5 1.2 V7.4 Q6.5 8.5 3.3 8.5 Q0.1 8.5 0.1 7.4 Z" fill="url(#cyl)"/>
<ellipse cx="3.3" cy="1.1" rx="2.5" ry="0.75" fill="#fff6c4"/>
<rect x="5.5" y="2" width="6.7" height="6.8" fill="#4a5cac"/>
<rect x="5.7" y="2.2" width="6.1" height="2.6" fill="url(#bh)"/>
<rect x="5.9" y="4.8" width="5.7" height="3.6" fill="#a8c0ec"/>
<rect x="3.2" y="5.2" width="7.1" height="6.8" fill="#464ca0"/>
<rect x="3.4" y="5.4" width="6.7" height="2.3" fill="url(#bh)"/>
<rect x="3.7" y="7.7" width="6.1" height="3.6" fill="#dcdef0"/>
<path d="M5.7 7.9 V11.2 M7.8 7.9 V11.2" stroke="#a8acd4" stroke-width="0.55"/>
</svg>
<div class="t" style="position:absolute;left:18.4px;top:150.22px;font:8.8px 'Liberation Sans', sans-serif;letter-spacing:-0.2px;color:#111;white-space:pre;line-height:11px">fach</div>
<svg style="position:absolute;left:3.2px;top:163.64px" width="13" height="12.5" viewBox="0 0 13 12.5">

<path d="M0.1 1.2 Q0.1 0 3.3 0 Q6.5 0 6.5 1.2 V7.4 Q6.5 8.5 3.3 8.5 Q0.1 8.5 0.1 7.4 Z" fill="url(#cyl)"/>
<ellipse cx="3.3" cy="1.1" rx="2.5" ry="0.75" fill="#fff6c4"/>
<rect x="5.5" y="2" width="6.7" height="6.8" fill="#4a5cac"/>
<rect x="5.7" y="2.2" width="6.1" height="2.6" fill="url(#bh)"/>
<rect x="5.9" y="4.8" width="5.7" height="3.6" fill="#a8c0ec"/>
<rect x="3.2" y="5.2" width="7.1" height="6.8" fill="#464ca0"/>
<rect x="3.4" y="5.4" width="6.7" height="2.3" fill="url(#bh)"/>
<rect x="3.7" y="7.7" width="6.1" height="3.6" fill="#dcdef0"/>
<path d="M5.7 7.9 V11.2 M7.8 7.9 V11.2" stroke="#a8acd4" stroke-width="0.55"/>
</svg>
<div class="t" style="position:absolute;left:18.4px;top:163.64px;font:8.8px 'Liberation Sans', sans-serif;letter-spacing:-0.2px;color:#111;white-space:pre;line-height:11px">fachkonferenzteilnahme</div>
<svg style="position:absolute;left:3.2px;top:177.06px" width="13" height="12.5" viewBox="0 0 13 12.5">

<path d="M0.1 1.2 Q0.1 0 3.3 0 Q6.5 0 6.5 1.2 V7.4 Q6.5 8.5 3.3 8.5 Q0.1 8.5 0.1 7.4 Z" fill="url(#cyl)"/>
<ellipse cx="3.3" cy="1.1" rx="2.5" ry="0.75" fill="#fff6c4"/>
<rect x="5.5" y="2" width="6.7" height="6.8" fill="#4a5cac"/>
<rect x="5.7" y="2.2" width="6.1" height="2.6" fill="url(#bh)"/>
<rect x="5.9" y="4.8" width="5.7" height="3.6" fill="#a8c0ec"/>
<rect x="3.2" y="5.2" width="7.1" height="6.8" fill="#464ca0"/>
<rect x="3.4" y="5.4" width="6.7" height="2.3" fill="url(#bh)"/>
<rect x="3.7" y="7.7" width="6.1" height="3.6" fill="#dcdef0"/>
<path d="M5.7 7.9 V11.2 M7.8 7.9 V11.2" stroke="#a8acd4" stroke-width="0.55"/>
</svg>
<div class="t" style="position:absolute;left:18.4px;top:177.06px;font:8.8px 'Liberation Sans', sans-serif;letter-spacing:-0.2px;color:#111;white-space:pre;line-height:11px">fachstunden</div>
<svg style="position:absolute;left:3.2px;top:190.48px" width="13" height="12.5" viewBox="0 0 13 12.5">

<path d="M0.1 1.2 Q0.1 0 3.3 0 Q6.5 0 6.5 1.2 V7.4 Q6.5 8.5 3.3 8.5 Q0.1 8.5 0.1 7.4 Z" fill="url(#cyl)"/>
<ellipse cx="3.3" cy="1.1" rx="2.5" ry="0.75" fill="#fff6c4"/>
<rect x="5.5" y="2" width="6.7" height="6.8" fill="#4a5cac"/>
<rect x="5.7" y="2.2" width="6.1" height="2.6" fill="url(#bh)"/>
<rect x="5.9" y="4.8" width="5.7" height="3.6" fill="#a8c0ec"/>
<rect x="3.2" y="5.2" width="7.1" height="6.8" fill="#464ca0"/>
<rect x="3.4" y="5.4" width="6.7" height="2.3" fill="url(#bh)"/>
<rect x="3.7" y="7.7" width="6.1" height="3.6" fill="#dcdef0"/>
<path d="M5.7 7.9 V11.2 M7.8 7.9 V11.2" stroke="#a8acd4" stroke-width="0.55"/>
</svg>
<div class="t" style="position:absolute;left:18.4px;top:190.48px;font:8.8px 'Liberation Sans', sans-serif;letter-spacing:-0.2px;color:#111;white-space:pre;line-height:11px">fachvorgabe</div>
<svg style="position:absolute;left:3.2px;top:203.9px" width="13" height="12.5" viewBox="0 0 13 12.5">

<path d="M0.1 1.2 Q0.1 0 3.3 0 Q6.5 0 6.5 1.2 V7.4 Q6.5 8.5 3.3 8.5 Q0.1 8.5 0.1 7.4 Z" fill="url(#cyl)"/>
<ellipse cx="3.3" cy="1.1" rx="2.5" ry="0.75" fill="#fff6c4"/>
<rect x="5.5" y="2" width="6.7" height="6.8" fill="#4a5cac"/>
<rect x="5.7" y="2.2" width="6.1" height="2.6" fill="url(#bh)"/>
<rect x="5.9" y="4.8" width="5.7" height="3.6" fill="#a8c0ec"/>
<rect x="3.2" y="5.2" width="7.1" height="6.8" fill="#464ca0"/>
<rect x="3.4" y="5.4" width="6.7" height="2.3" fill="url(#bh)"/>
<rect x="3.7" y="7.7" width="6.1" height="3.6" fill="#dcdef0"/>
<path d="M5.7 7.9 V11.2 M7.8 7.9 V11.2" stroke="#a8acd4" stroke-width="0.55"/>
</svg>
<div class="t" style="position:absolute;left:18.4px;top:203.9px;font:8.8px 'Liberation Sans', sans-serif;letter-spacing:-0.2px;color:#111;white-space:pre;line-height:11px">filter</div>
<svg style="position:absolute;left:3.2px;top:217.32px" width="13" height="12.5" viewBox="0 0 13 12.5">

<path d="M0.1 1.2 Q0.1 0 3.3 0 Q6.5 0 6.5 1.2 V7.4 Q6.5 8.5 3.3 8.5 Q0.1 8.5 0.1 7.4 Z" fill="url(#cyl)"/>
<ellipse cx="3.3" cy="1.1" rx="2.5" ry="0.75" fill="#fff6c4"/>
<rect x="5.5" y="2" width="6.7" height="6.8" fill="#4a5cac"/>
<rect x="5.7" y="2.2" width="6.1" height="2.6" fill="url(#bh)"/>
<rect x="5.9" y="4.8" width="5.7" height="3.6" fill="#a8c0ec"/>
<rect x="3.2" y="5.2" width="7.1" height="6.8" fill="#464ca0"/>
<rect x="3.4" y="5.4" width="6.7" height="2.3" fill="url(#bh)"/>
<rect x="3.7" y="7.7" width="6.1" height="3.6" fill="#dcdef0"/>
<path d="M5.7 7.9 V11.2 M7.8 7.9 V11.2" stroke="#a8acd4" stroke-width="0.55"/>
</svg>
<div class="t" style="position:absolute;left:18.4px;top:217.32px;font:8.8px 'Liberation Sans', sans-serif;letter-spacing:-0.2px;color:#111;white-space:pre;line-height:11px">foerderung</div>
<svg style="position:absolute;left:3.2px;top:230.73999999999998px" width="13" height="12.5" viewBox="0 0 13 12.5">

<path d="M0.1 1.2 Q0.1 0 3.3 0 Q6.5 0 6.5 1.2 V7.4 Q6.5 8.5 3.3 8.5 Q0.1 8.5 0.1 7.4 Z" fill="url(#cyl)"/>
<ellipse cx="3.3" cy="1.1" rx="2.5" ry="0.75" fill="#fff6c4"/>
<rect x="5.5" y="2" width="6.7" height="6.8" fill="#4a5cac"/>
<rect x="5.7" y="2.2" width="6.1" height="2.6" fill="url(#bh)"/>
<rect x="5.9" y="4.8" width="5.7" height="3.6" fill="#a8c0ec"/>
<rect x="3.2" y="5.2" width="7.1" height="6.8" fill="#464ca0"/>
<rect x="3.4" y="5.4" width="6.7" height="2.3" fill="url(#bh)"/>
<rect x="3.7" y="7.7" width="6.1" height="3.6" fill="#dcdef0"/>
<path d="M5.7 7.9 V11.2 M7.8 7.9 V11.2" stroke="#a8acd4" stroke-width="0.55"/>
</svg>
<div class="t" style="position:absolute;left:18.4px;top:230.73999999999998px;font:8.8px 'Liberation Sans', sans-serif;letter-spacing:-0.2px;color:#111;white-space:pre;line-height:11px">fremdsprachen</div>
<svg style="position:absolute;left:3.2px;top:244.16px" width="13" height="12.5" viewBox="0 0 13 12.5">

<path d="M0.1 1.2 Q0.1 0 3.3 0 Q6.5 0 6.5 1.2 V7.4 Q6.5 8.5 3.3 8.5 Q0.1 8.5 0.1 7.4 Z" fill="url(#cyl)"/>
<ellipse cx="3.3" cy="1.1" rx="2.5" ry="0.75" fill="#fff6c4"/>
<rect x="5.5" y="2" width="6.7" height="6.8" fill="#4a5cac"/>
<rect x="5.7" y="2.2" width="6.1" height="2.6" fill="url(#bh)"/>
<rect x="5.9" y="4.8" width="5.7" height="3.6" fill="#a8c0ec"/>
<rect x="3.2" y="5.2" width="7.1" height="6.8" fill="#464ca0"/>
<rect x="3.4" y="5.4" width="6.7" height="2.3" fill="url(#bh)"/>
<rect x="3.7" y="7.7" width="6.1" height="3.6" fill="#dcdef0"/>
<path d="M5.7 7.9 V11.2 M7.8 7.9 V11.2" stroke="#a8acd4" stroke-width="0.55"/>
</svg>
<div class="t" style="position:absolute;left:18.4px;top:244.16px;font:8.8px 'Liberation Sans', sans-serif;letter-spacing:-0.2px;color:#111;white-space:pre;line-height:11px">gesamtkonferenz</div>
<svg style="position:absolute;left:3.2px;top:257.58000000000004px" width="13" height="12.5" viewBox="0 0 13 12.5">

<path d="M0.1 1.2 Q0.1 0 3.3 0 Q6.5 0 6.5 1.2 V7.4 Q6.5 8.5 3.3 8.5 Q0.1 8.5 0.1 7.4 Z" fill="url(#cyl)"/>
<ellipse cx="3.3" cy="1.1" rx="2.5" ry="0.75" fill="#fff6c4"/>
<rect x="5.5" y="2" width="6.7" height="6.8" fill="#4a5cac"/>
<rect x="5.7" y="2.2" width="6.1" height="2.6" fill="url(#bh)"/>
<rect x="5.9" y="4.8" width="5.7" height="3.6" fill="#a8c0ec"/>
<rect x="3.2" y="5.2" width="7.1" height="6.8" fill="#464ca0"/>
<rect x="3.4" y="5.4" width="6.7" height="2.3" fill="url(#bh)"/>
<rect x="3.7" y="7.7" width="6.1" height="3.6" fill="#dcdef0"/>
<path d="M5.7 7.9 V11.2 M7.8 7.9 V11.2" stroke="#a8acd4" stroke-width="0.55"/>
</svg>
<div class="t" style="position:absolute;left:18.4px;top:257.58000000000004px;font:8.8px 'Liberation Sans', sans-serif;letter-spacing:-0.2px;color:#111;white-space:pre;line-height:11px">gruppe</div>
<svg style="position:absolute;left:3.2px;top:271.0px" width="13" height="12.5" viewBox="0 0 13 12.5">

<path d="M0.1 1.2 Q0.1 0 3.3 0 Q6.5 0 6.5 1.2 V7.4 Q6.5 8.5 3.3 8.5 Q0.1 8.5 0.1 7.4 Z" fill="url(#cyl)"/>
<ellipse cx="3.3" cy="1.1" rx="2.5" ry="0.75" fill="#fff6c4"/>
<rect x="5.5" y="2" width="6.7" height="6.8" fill="#4a5cac"/>
<rect x="5.7" y="2.2" width="6.1" height="2.6" fill="url(#bh)"/>
<rect x="5.9" y="4.8" width="5.7" height="3.6" fill="#a8c0ec"/>
<rect x="3.2" y="5.2" width="7.1" height="6.8" fill="#464ca0"/>
<rect x="3.4" y="5.4" width="6.7" height="2.3" fill="url(#bh)"/>
<rect x="3.7" y="7.7" width="6.1" height="3.6" fill="#dcdef0"/>
<path d="M5.7 7.9 V11.2 M7.8 7.9 V11.2" stroke="#a8acd4" stroke-width="0.55"/>
</svg>
<div class="t" style="position:absolute;left:18.4px;top:271.0px;font:8.8px 'Liberation Sans', sans-serif;letter-spacing:-0.2px;color:#111;white-space:pre;line-height:11px">herkunft</div>
<svg style="position:absolute;left:3.2px;top:284.42px" width="13" height="12.5" viewBox="0 0 13 12.5">

<path d="M0.1 1.2 Q0.1 0 3.3 0 Q6.5 0 6.5 1.2 V7.4 Q6.5 8.5 3.3 8.5 Q0.1 8.5 0.1 7.4 Z" fill="url(#cyl)"/>
<ellipse cx="3.3" cy="1.1" rx="2.5" ry="0.75" fill="#fff6c4"/>
<rect x="5.5" y="2" width="6.7" height="6.8" fill="#4a5cac"/>
<rect x="5.7" y="2.2" width="6.1" height="2.6" fill="url(#bh)"/>
<rect x="5.9" y="4.8" width="5.7" height="3.6" fill="#a8c0ec"/>
<rect x="3.2" y="5.2" width="7.1" height="6.8" fill="#464ca0"/>
<rect x="3.4" y="5.4" width="6.7" height="2.3" fill="url(#bh)"/>
<rect x="3.7" y="7.7" width="6.1" height="3.6" fill="#dcdef0"/>
<path d="M5.7 7.9 V11.2 M7.8 7.9 V11.2" stroke="#a8acd4" stroke-width="0.55"/>
</svg>
<div class="t" style="position:absolute;left:18.4px;top:284.42px;font:8.8px 'Liberation Sans', sans-serif;letter-spacing:-0.2px;color:#111;white-space:pre;line-height:11px">ident</div>
<svg style="position:absolute;left:3.2px;top:297.84000000000003px" width="13" height="12.5" viewBox="0 0 13 12.5">

<path d="M0.1 1.2 Q0.1 0 3.3 0 Q6.5 0 6.5 1.2 V7.4 Q6.5 8.5 3.3 8.5 Q0.1 8.5 0.1 7.4 Z" fill="url(#cyl)"/>
<ellipse cx="3.3" cy="1.1" rx="2.5" ry="0.75" fill="#fff6c4"/>
<rect x="5.5" y="2" width="6.7" height="6.8" fill="#4a5cac"/>
<rect x="5.7" y="2.2" width="6.1" height="2.6" fill="url(#bh)"/>
<rect x="5.9" y="4.8" width="5.7" height="3.6" fill="#a8c0ec"/>
<rect x="3.2" y="5.2" width="7.1" height="6.8" fill="#464ca0"/>
<rect x="3.4" y="5.4" width="6.7" height="2.3" fill="url(#bh)"/>
<rect x="3.7" y="7.7" width="6.1" height="3.6" fill="#dcdef0"/>
<path d="M5.7 7.9 V11.2 M7.8 7.9 V11.2" stroke="#a8acd4" stroke-width="0.55"/>
</svg>
<div class="t" style="position:absolute;left:18.4px;top:297.84000000000003px;font:8.8px 'Liberation Sans', sans-serif;letter-spacing:-0.2px;color:#111;white-space:pre;line-height:11px">info</div>
<svg style="position:absolute;left:3.2px;top:311.26000000000005px" width="13" height="12.5" viewBox="0 0 13 12.5">

<path d="M0.1 1.2 Q0.1 0 3.3 0 Q6.5 0 6.5 1.2 V7.4 Q6.5 8.5 3.3 8.5 Q0.1 8.5 0.1 7.4 Z" fill="url(#cyl)"/>
<ellipse cx="3.3" cy="1.1" rx="2.5" ry="0.75" fill="#fff6c4"/>
<rect x="5.5" y="2" width="6.7" height="6.8" fill="#4a5cac"/>
<rect x="5.7" y="2.2" width="6.1" height="2.6" fill="url(#bh)"/>
<rect x="5.9" y="4.8" width="5.7" height="3.6" fill="#a8c0ec"/>
<rect x="3.2" y="5.2" width="7.1" height="6.8" fill="#464ca0"/>
<rect x="3.4" y="5.4" width="6.7" height="2.3" fill="url(#bh)"/>
<rect x="3.7" y="7.7" width="6.1" height="3.6" fill="#dcdef0"/>
<path d="M5.7 7.9 V11.2 M7.8 7.9 V11.2" stroke="#a8acd4" stroke-width="0.55"/>
</svg>
<div class="t" style="position:absolute;left:18.4px;top:311.26000000000005px;font:8.8px 'Liberation Sans', sans-serif;letter-spacing:-0.2px;color:#111;white-space:pre;line-height:11px">infoprogramm</div>
<svg style="position:absolute;left:3.2px;top:324.68px" width="13" height="12.5" viewBox="0 0 13 12.5">

<path d="M0.1 1.2 Q0.1 0 3.3 0 Q6.5 0 6.5 1.2 V7.4 Q6.5 8.5 3.3 8.5 Q0.1 8.5 0.1 7.4 Z" fill="url(#cyl)"/>
<ellipse cx="3.3" cy="1.1" rx="2.5" ry="0.75" fill="#fff6c4"/>
<rect x="5.5" y="2" width="6.7" height="6.8" fill="#4a5cac"/>
<rect x="5.7" y="2.2" width="6.1" height="2.6" fill="url(#bh)"/>
<rect x="5.9" y="4.8" width="5.7" height="3.6" fill="#a8c0ec"/>
<rect x="3.2" y="5.2" width="7.1" height="6.8" fill="#464ca0"/>
<rect x="3.4" y="5.4" width="6.7" height="2.3" fill="url(#bh)"/>
<rect x="3.7" y="7.7" width="6.1" height="3.6" fill="#dcdef0"/>
<path d="M5.7 7.9 V11.2 M7.8 7.9 V11.2" stroke="#a8acd4" stroke-width="0.55"/>
</svg>
<div class="t" style="position:absolute;left:18.4px;top:324.68px;font:8.8px 'Liberation Sans', sans-serif;letter-spacing:-0.2px;color:#111;white-space:pre;line-height:11px">jahrgangsdaten</div>
<svg style="position:absolute;left:3.2px;top:338.1px" width="13" height="12.5" viewBox="0 0 13 12.5">

<path d="M0.1 1.2 Q0.1 0 3.3 0 Q6.5 0 6.5 1.2 V7.4 Q6.5 8.5 3.3 8.5 Q0.1 8.5 0.1 7.4 Z" fill="url(#cyl)"/>
<ellipse cx="3.3" cy="1.1" rx="2.5" ry="0.75" fill="#fff6c4"/>
<rect x="5.5" y="2" width="6.7" height="6.8" fill="#4a5cac"/>
<rect x="5.7" y="2.2" width="6.1" height="2.6" fill="url(#bh)"/>
<rect x="5.9" y="4.8" width="5.7" height="3.6" fill="#a8c0ec"/>
<rect x="3.2" y="5.2" width="7.1" height="6.8" fill="#464ca0"/>
<rect x="3.4" y="5.4" width="6.7" height="2.3" fill="url(#bh)"/>
<rect x="3.7" y="7.7" width="6.1" height="3.6" fill="#dcdef0"/>
<path d="M5.7 7.9 V11.2 M7.8 7.9 V11.2" stroke="#a8acd4" stroke-width="0.55"/>
</svg>
<div class="t" style="position:absolute;left:18.4px;top:338.1px;font:8.8px 'Liberation Sans', sans-serif;letter-spacing:-0.2px;color:#111;white-space:pre;line-height:11px">jgdsonderpaed</div>
<svg style="position:absolute;left:3.2px;top:351.52000000000004px" width="13" height="12.5" viewBox="0 0 13 12.5">

<path d="M0.1 1.2 Q0.1 0 3.3 0 Q6.5 0 6.5 1.2 V7.4 Q6.5 8.5 3.3 8.5 Q0.1 8.5 0.1 7.4 Z" fill="url(#cyl)"/>
<ellipse cx="3.3" cy="1.1" rx="2.5" ry="0.75" fill="#fff6c4"/>
<rect x="5.5" y="2" width="6.7" height="6.8" fill="#4a5cac"/>
<rect x="5.7" y="2.2" width="6.1" height="2.6" fill="url(#bh)"/>
<rect x="5.9" y="4.8" width="5.7" height="3.6" fill="#a8c0ec"/>
<rect x="3.2" y="5.2" width="7.1" height="6.8" fill="#464ca0"/>
<rect x="3.4" y="5.4" width="6.7" height="2.3" fill="url(#bh)"/>
<rect x="3.7" y="7.7" width="6.1" height="3.6" fill="#dcdef0"/>
<path d="M5.7 7.9 V11.2 M7.8 7.9 V11.2" stroke="#a8acd4" stroke-width="0.55"/>
</svg>
<div class="t" style="position:absolute;left:18.4px;top:351.52000000000004px;font:8.8px 'Liberation Sans', sans-serif;letter-spacing:-0.2px;color:#111;white-space:pre;line-height:11px">klassenkonferenz</div>
<svg style="position:absolute;left:3.2px;top:364.94px" width="13" height="12.5" viewBox="0 0 13 12.5">

<path d="M0.1 1.2 Q0.1 0 3.3 0 Q6.5 0 6.5 1.2 V7.4 Q6.5 8.5 3.3 8.5 Q0.1 8.5 0.1 7.4 Z" fill="url(#cyl)"/>
<ellipse cx="3.3" cy="1.1" rx="2.5" ry="0.75" fill="#fff6c4"/>
<rect x="5.5" y="2" width="6.7" height="6.8" fill="#4a5cac"/>
<rect x="5.7" y="2.2" width="6.1" height="2.6" fill="url(#bh)"/>
<rect x="5.9" y="4.8" width="5.7" height="3.6" fill="#a8c0ec"/>
<rect x="3.2" y="5.2" width="7.1" height="6.8" fill="#464ca0"/>
<rect x="3.4" y="5.4" width="6.7" height="2.3" fill="url(#bh)"/>
<rect x="3.7" y="7.7" width="6.1" height="3.6" fill="#dcdef0"/>
<path d="M5.7 7.9 V11.2 M7.8 7.9 V11.2" stroke="#a8acd4" stroke-width="0.55"/>
</svg>
<div class="t" style="position:absolute;left:18.4px;top:364.94px;font:8.8px 'Liberation Sans', sans-serif;letter-spacing:-0.2px;color:#111;white-space:pre;line-height:11px">konfession</div>
<svg style="position:absolute;left:3.2px;top:378.36px" width="13" height="12.5" viewBox="0 0 13 12.5">

<path d="M0.1 1.2 Q0.1 0 3.3 0 Q6.5 0 6.5 1.2 V7.4 Q6.5 8.5 3.3 8.5 Q0.1 8.5 0.1 7.4 Z" fill="url(#cyl)"/>
<ellipse cx="3.3" cy="1.1" rx="2.5" ry="0.75" fill="#fff6c4"/>
<rect x="5.5" y="2" width="6.7" height="6.8" fill="#4a5cac"/>
<rect x="5.7" y="2.2" width="6.1" height="2.6" fill="url(#bh)"/>
<rect x="5.9" y="4.8" width="5.7" height="3.6" fill="#a8c0ec"/>
<rect x="3.2" y="5.2" width="7.1" height="6.8" fill="#464ca0"/>
<rect x="3.4" y="5.4" width="6.7" height="2.3" fill="url(#bh)"/>
<rect x="3.7" y="7.7" width="6.1" height="3.6" fill="#dcdef0"/>
<path d="M5.7 7.9 V11.2 M7.8 7.9 V11.2" stroke="#a8acd4" stroke-width="0.55"/>
</svg>
<div class="t" style="position:absolute;left:18.4px;top:378.36px;font:8.8px 'Liberation Sans', sans-serif;letter-spacing:-0.2px;color:#111;white-space:pre;line-height:11px">konfig</div>
<svg style="position:absolute;left:3.2px;top:391.78000000000003px" width="13" height="12.5" viewBox="0 0 13 12.5">

<path d="M0.1 1.2 Q0.1 0 3.3 0 Q6.5 0 6.5 1.2 V7.4 Q6.5 8.5 3.3 8.5 Q0.1 8.5 0.1 7.4 Z" fill="url(#cyl)"/>
<ellipse cx="3.3" cy="1.1" rx="2.5" ry="0.75" fill="#fff6c4"/>
<rect x="5.5" y="2" width="6.7" height="6.8" fill="#4a5cac"/>
<rect x="5.7" y="2.2" width="6.1" height="2.6" fill="url(#bh)"/>
<rect x="5.9" y="4.8" width="5.7" height="3.6" fill="#a8c0ec"/>
<rect x="3.2" y="5.2" width="7.1" height="6.8" fill="#464ca0"/>
<rect x="3.4" y="5.4" width="6.7" height="2.3" fill="url(#bh)"/>
<rect x="3.7" y="7.7" width="6.1" height="3.6" fill="#dcdef0"/>
<path d="M5.7 7.9 V11.2 M7.8 7.9 V11.2" stroke="#a8acd4" stroke-width="0.55"/>
</svg>
<div class="t" style="position:absolute;left:18.4px;top:391.78000000000003px;font:8.8px 'Liberation Sans', sans-serif;letter-spacing:-0.2px;color:#111;white-space:pre;line-height:11px">kontakt</div>
<svg style="position:absolute;left:3.2px;top:405.20000000000005px" width="13" height="12.5" viewBox="0 0 13 12.5">

<path d="M0.1 1.2 Q0.1 0 3.3 0 Q6.5 0 6.5 1.2 V7.4 Q6.5 8.5 3.3 8.5 Q0.1 8.5 0.1 7.4 Z" fill="url(#cyl)"/>
<ellipse cx="3.3" cy="1.1" rx="2.5" ry="0.75" fill="#fff6c4"/>
<rect x="5.5" y="2" width="6.7" height="6.8" fill="#4a5cac"/>
<rect x="5.7" y="2.2" width="6.1" height="2.6" fill="url(#bh)"/>
<rect x="5.9" y="4.8" width="5.7" height="3.6" fill="#a8c0ec"/>
<rect x="3.2" y="5.2" width="7.1" height="6.8" fill="#464ca0"/>
<rect x="3.4" y="5.4" width="6.7" height="2.3" fill="url(#bh)"/>
<rect x="3.7" y="7.7" width="6.1" height="3.6" fill="#dcdef0"/>
<path d="M5.7 7.9 V11.2 M7.8 7.9 V11.2" stroke="#a8acd4" stroke-width="0.55"/>
</svg>
<div class="t" style="position:absolute;left:18.4px;top:405.20000000000005px;font:8.8px 'Liberation Sans', sans-serif;letter-spacing:-0.2px;color:#111;white-space:pre;line-height:11px">krankenkasse</div>
<svg style="position:absolute;left:3.2px;top:418.62px" width="13" height="12.5" viewBox="0 0 13 12.5">

<path d="M0.1 1.2 Q0.1 0 3.3 0 Q6.5 0 6.5 1.2 V7.4 Q6.5 8.5 3.3 8.5 Q0.1 8.5 0.1 7.4 Z" fill="url(#cyl)"/>
<ellipse cx="3.3" cy="1.1" rx="2.5" ry="0.75" fill="#fff6c4"/>
<rect x="5.5" y="2" width="6.7" height="6.8" fill="#4a5cac"/>
<rect x="5.7" y="2.2" width="6.1" height="2.6" fill="url(#bh)"/>
<rect x="5.9" y="4.8" width="5.7" height="3.6" fill="#a8c0ec"/>
<rect x="3.2" y="5.2" width="7.1" height="6.8" fill="#464ca0"/>
<rect x="3.4" y="5.4" width="6.7" height="2.3" fill="url(#bh)"/>
<rect x="3.7" y="7.7" width="6.1" height="3.6" fill="#dcdef0"/>
<path d="M5.7 7.9 V11.2 M7.8 7.9 V11.2" stroke="#a8acd4" stroke-width="0.55"/>
</svg>
<div class="t" style="position:absolute;left:18.4px;top:418.62px;font:8.8px 'Liberation Sans', sans-serif;letter-spacing:-0.2px;color:#111;white-space:pre;line-height:11px">kurs</div>
<svg style="position:absolute;left:3.2px;top:432.04px" width="13" height="12.5" viewBox="0 0 13 12.5">

<path d="M0.1 1.2 Q0.1 0 3.3 0 Q6.5 0 6.5 1.2 V7.4 Q6.5 8.5 3.3 8.5 Q0.1 8.5 0.1 7.4 Z" fill="url(#cyl)"/>
<ellipse cx="3.3" cy="1.1" rx="2.5" ry="0.75" fill="#fff6c4"/>
<rect x="5.5" y="2" width="6.7" height="6.8" fill="#4a5cac"/>
<rect x="5.7" y="2.2" width="6.1" height="2.6" fill="url(#bh)"/>
<rect x="5.9" y="4.8" width="5.7" height="3.6" fill="#a8c0ec"/>
<rect x="3.2" y="5.2" width="7.1" height="6.8" fill="#464ca0"/>
<rect x="3.4" y="5.4" width="6.7" height="2.3" fill="url(#bh)"/>
<rect x="3.7" y="7.7" width="6.1" height="3.6" fill="#dcdef0"/>
<path d="M5.7 7.9 V11.2 M7.8 7.9 V11.2" stroke="#a8acd4" stroke-width="0.55"/>
</svg>
<div class="t" style="position:absolute;left:18.4px;top:432.04px;font:8.8px 'Liberation Sans', sans-serif;letter-spacing:-0.2px;color:#111;white-space:pre;line-height:11px">land</div>
<svg style="position:absolute;left:3.2px;top:445.46000000000004px" width="13" height="12.5" viewBox="0 0 13 12.5">

<path d="M0.1 1.2 Q0.1 0 3.3 0 Q6.5 0 6.5 1.2 V7.4 Q6.5 8.5 3.3 8.5 Q0.1 8.5 0.1 7.4 Z" fill="url(#cyl)"/>
<ellipse cx="3.3" cy="1.1" rx="2.5" ry="0.75" fill="#fff6c4"/>
<rect x="5.5" y="2" width="6.7" height="6.8" fill="#4a5cac"/>
<rect x="5.7" y="2.2" width="6.1" height="2.6" fill="url(#bh)"/>
<rect x="5.9" y="4.8" width="5.7" height="3.6" fill="#a8c0ec"/>
<rect x="3.2" y="5.2" width="7.1" height="6.8" fill="#464ca0"/>
<rect x="3.4" y="5.4" width="6.7" height="2.3" fill="url(#bh)"/>
<rect x="3.7" y="7.7" width="6.1" height="3.6" fill="#dcdef0"/>
<path d="M5.7 7.9 V11.2 M7.8 7.9 V11.2" stroke="#a8acd4" stroke-width="0.55"/>
</svg>
<div class="t" style="position:absolute;left:18.4px;top:445.46000000000004px;font:8.8px 'Liberation Sans', sans-serif;letter-spacing:-0.2px;color:#111;white-space:pre;line-height:11px">landiso</div>
<svg style="position:absolute;left:3.2px;top:458.88px" width="13" height="12.5" viewBox="0 0 13 12.5">

<path d="M0.1 1.2 Q0.1 0 3.3 0 Q6.5 0 6.5 1.2 V7.4 Q6.5 8.5 3.3 8.5 Q0.1 8.5 0.1 7.4 Z" fill="url(#cyl)"/>
<ellipse cx="3.3" cy="1.1" rx="2.5" ry="0.75" fill="#fff6c4"/>
<rect x="5.5" y="2" width="6.7" height="6.8" fill="#4a5cac"/>
<rect x="5.7" y="2.2" width="6.1" height="2.6" fill="url(#bh)"/>
<rect x="5.9" y="4.8" width="5.7" height="3.6" fill="#a8c0ec"/>
<rect x="3.2" y="5.2" width="7.1" height="6.8" fill="#464ca0"/>
<rect x="3.4" y="5.4" width="6.7" height="2.3" fill="url(#bh)"/>
<rect x="3.7" y="7.7" width="6.1" height="3.6" fill="#dcdef0"/>
<path d="M5.7 7.9 V11.2 M7.8 7.9 V11.2" stroke="#a8acd4" stroke-width="0.55"/>
</svg>
<div class="t" style="position:absolute;left:18.4px;top:458.88px;font:8.8px 'Liberation Sans', sans-serif;letter-spacing:-0.2px;color:#111;white-space:pre;line-height:11px">laufbahndaten</div>
<svg style="position:absolute;left:3.2px;top:472.3px" width="13" height="12.5" viewBox="0 0 13 12.5">

<path d="M0.1 1.2 Q0.1 0 3.3 0 Q6.5 0 6.5 1.2 V7.4 Q6.5 8.5 3.3 8.5 Q0.1 8.5 0.1 7.4 Z" fill="url(#cyl)"/>
<ellipse cx="3.3" cy="1.1" rx="2.5" ry="0.75" fill="#fff6c4"/>
<rect x="5.5" y="2" width="6.7" height="6.8" fill="#4a5cac"/>
<rect x="5.7" y="2.2" width="6.1" height="2.6" fill="url(#bh)"/>
<rect x="5.9" y="4.8" width="5.7" height="3.6" fill="#a8c0ec"/>
<rect x="3.2" y="5.2" width="7.1" height="6.8" fill="#464ca0"/>
<rect x="3.4" y="5.4" width="6.7" height="2.3" fill="url(#bh)"/>
<rect x="3.7" y="7.7" width="6.1" height="3.6" fill="#dcdef0"/>
<path d="M5.7 7.9 V11.2 M7.8 7.9 V11.2" stroke="#a8acd4" stroke-width="0.55"/>
</svg>
<div class="t" style="position:absolute;left:18.4px;top:472.3px;font:8.8px 'Liberation Sans', sans-serif;letter-spacing:-0.2px;color:#111;white-space:pre;line-height:11px">lb</div>
<svg style="position:absolute;left:3.2px;top:485.72px" width="13" height="12.5" viewBox="0 0 13 12.5">

<path d="M0.1 1.2 Q0.1 0 3.3 0 Q6.5 0 6.5 1.2 V7.4 Q6.5 8.5 3.3 8.5 Q0.1 8.5 0.1 7.4 Z" fill="url(#cyl)"/>
<ellipse cx="3.3" cy="1.1" rx="2.5" ry="0.75" fill="#fff6c4"/>
<rect x="5.5" y="2" width="6.7" height="6.8" fill="#4a5cac"/>
<rect x="5.7" y="2.2" width="6.1" height="2.6" fill="url(#bh)"/>
<rect x="5.9" y="4.8" width="5.7" height="3.6" fill="#a8c0ec"/>
<rect x="3.2" y="5.2" width="7.1" height="6.8" fill="#464ca0"/>
<rect x="3.4" y="5.4" width="6.7" height="2.3" fill="url(#bh)"/>
<rect x="3.7" y="7.7" width="6.1" height="3.6" fill="#dcdef0"/>
<path d="M5.7 7.9 V11.2 M7.8 7.9 V11.2" stroke="#a8acd4" stroke-width="0.55"/>
</svg>
<div class="t" style="position:absolute;left:18.4px;top:485.72px;font:8.8px 'Liberation Sans', sans-serif;letter-spacing:-0.2px;color:#111;white-space:pre;line-height:11px">lehramt</div>
<div style="position:absolute;left:120.6px;top:0;width:12.3px;height:497px;background:#f0f0f0"></div>
<div style="position:absolute;left:120.6px;top:13.5px;width:10.9px;height:264px;background:#cdcdcd"></div>
<svg style="position:absolute;left:122.5px;top:4.8px" width="8" height="6" viewBox="0 0 8 6"><path d="M1.6 4.8 L4 1.8 L6.4 4.8" stroke="#5a5a5a" stroke-width="1.4" fill="none"/></svg>
<svg style="position:absolute;left:122.6px;top:487.6px" width="8" height="6" viewBox="0 0 8 6"><path d="M1.6 1.2 L4 4.2 L6.4 1.2" stroke="#5a5a5a" stroke-width="1.4" fill="none"/></svg>
</div>
<svg style="position:absolute;left:11.6px;top:27.8px" width="13" height="11.5" viewBox="0 0 13 11.5"><defs><linearGradient id="fg" x1="0" x2="0" y1="0" y2="1"><stop offset="0" stop-color="#fbe890"/><stop offset="1" stop-color="#f0b22c"/></linearGradient></defs><path d="M0.6 2.6 H4.2 L5.2 3.6 H9.2 V10.6 H0.6 Z" fill="#e8c060" stroke="#b4862a" stroke-width="0.7"/><path d="M2.4 5.4 H12.2 L9.6 10.8 H0.6 Z" fill="url(#fg)" stroke="#b07a20" stroke-width="0.7"/><path d="M7.6 2.6 Q9.4 0.4 11.4 1.8" stroke="#3a6ac0" stroke-width="1" fill="none"/><path d="M10.3 1 L12 2.4 L10.2 3 Z" fill="#2a5ab0"/></svg>
<svg style="position:absolute;left:29.9px;top:27.8px" width="10.5" height="11" viewBox="0 0 10.5 11"><defs><linearGradient id="sg" x1="0" x2="1" y1="0" y2="0"><stop offset="0" stop-color="#8a8aee"/><stop offset="0.5" stop-color="#5a5ad0"/><stop offset="1" stop-color="#3232a6"/></linearGradient></defs><rect x="0.1" y="0.1" width="10.2" height="10.8" rx="0.9" fill="url(#sg)"/><rect x="2.2" y="0.8" width="5.8" height="4.2" fill="#eef0fa"/><rect x="3.2" y="8.3" width="3.8" height="2.6" fill="#22224a"/><rect x="5.2" y="8.8" width="1.3" height="1.8" fill="#c8c8e0"/></svg>
<div style="position:absolute;left:45.2px;top:27.2px;width:1px;height:12.4px;background:#b8b8b8"></div>
<svg style="position:absolute;left:52px;top:29px" width="12" height="10" viewBox="0 0 12 10"><path d="M1 6.5 L6.5 1 Q8 0 9.5 1.2 L10 1.8 Q10.8 3 9.8 4 L4.5 9 Q3 9.8 1.8 8.8 L1 8 Q0.2 7.2 1 6.5 Z" fill="#e6ebf2" stroke="#5a6a88" stroke-width="0.8"/><path d="M4.2 9.3 H11" stroke="#222" stroke-width="1"/></svg>
<div style="position:absolute;left:68.6px;top:27px;width:1px;height:12.8px;background:#b8b8b8"></div>
<svg style="position:absolute;left:76.5px;top:29px" width="10" height="9.5" viewBox="0 0 10 9.5"><path d="M1 1 L9 8.5 M9 1 L1 8.5" stroke="#e0161b" stroke-width="1.7"/></svg>
<svg style="position:absolute;left:92px;top:29px" width="12.5" height="9.5" viewBox="0 0 12.5 9.5"><path d="M0.8 5 L4 8.3 L11.8 0.8" stroke="#3a9a1e" stroke-width="1.9" fill="none"/></svg>
<div style="position:absolute;left:40.3px;top:46.6px;width:30.4px;height:13.4px;box-sizing:border-box;border:0.8px solid #c9c9c9;border-bottom:none;background:linear-gradient(#f3f3f3,#e9e9e9)"></div>
<div style="position:absolute;left:70.9px;top:46.6px;width:30px;height:13.4px;box-sizing:border-box;border:0.8px solid #c9c9c9;border-bottom:none;background:linear-gradient(#f3f3f3,#e9e9e9)"></div>
<div style="position:absolute;left:7px;top:59.5px;width:754px;height:0.8px;background:#c9c9c9"></div>
<div style="position:absolute;left:7.5px;top:45.2px;width:33px;height:15.2px;box-sizing:border-box;border:0.8px solid #c9c9c9;border-bottom:none;background:#fff"></div>
<div style="position:absolute;left:9.5px;top:47.1px;width:29.3px;height:11.4px;box-sizing:border-box;border:0.75px dotted #222"></div>
<div class="t" style="position:absolute;left:12.1px;top:46.5px;font:7.9px 'Liberation Sans', sans-serif;color:#000;white-space:pre;line-height:11px">Model</div>
<div class="t" style="position:absolute;left:43.7px;top:48.2px;font:7.9px 'Liberation Sans', sans-serif;letter-spacing:-0.3px;color:#000;white-space:pre;line-height:11px">SQL</div>
<div class="t" style="position:absolute;left:74.7px;top:48.2px;font:7.9px 'Liberation Sans', sans-serif;color:#000;white-space:pre;line-height:11px">Result</div>
</div></div></body></html>
